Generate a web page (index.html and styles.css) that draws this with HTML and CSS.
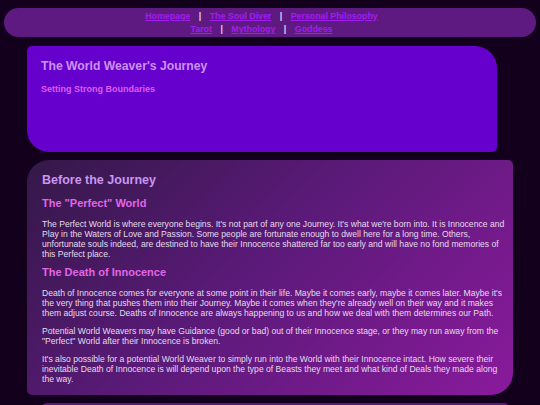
FILE: index.html
```html
<!DOCTYPE html>
<html>
<head>
<meta charset="utf-8">
<link rel="stylesheet" href="styles.css">
</head>
<body>
<nav class="nav">
  <div class="nav-row">
    <a href="#">Homepage</a><span class="sep">|</span><a href="#">The Soul Diver</a><span class="sep">|</span><a href="#">Personal Philosophy</a>
  </div>
  <div class="nav-row">
    <a href="#">Tarot</a><span class="sep">|</span><a href="#">Mythology</a><span class="sep">|</span><a href="#">Goddess</a>
  </div>
</nav>
<header class="hero">
  <h1 class="hero-title">The World Weaver's Journey</h1>
  <p class="hero-sub">Setting Strong Boundaries</p>
</header>
<main class="card">
  <h2 class="card-title">Before the Journey</h2>
  <h3 class="sec-title">The "Perfect" World</h3>
  <p>The Perfect World is where everyone begins. It's not part of any one Journey. It's what we're born into. It is Innocence and Play in the Waters of Love and Passion. Some people are fortunate enough to dwell here for a long time. Others, unfortunate souls indeed, are destined to have their Innocence shattered far too early and will have no fond memories of this Perfect place.</p>
  <h3 class="sec-title sec-gap">The Death of Innocence</h3>
  <p>Death of Innocence comes for everyone at some point in their life. Maybe it comes early, maybe it comes later. Maybe it's the very thing that pushes them into their Journey. Maybe it comes when they're already well on their way and it makes them adjust course. Deaths of Innocence are always happening to us and how we deal with them determines our Path.</p>
  <p>Potential World Weavers may have Guidance (good or bad) out of their Innocence stage, or they may run away from the "Perfect" World after their Innocence is broken.</p>
  <p>It's also possible for a potential World Weaver to simply run into the World with their Innocence intact. How severe their inevitable Death of Innocence is will depend upon the type of Beasts they meet and what kind of Deals they made along the way.</p>
</main>
<section class="next"></section>
</body>
</html>
```

FILE: styles.css
```css
html, body {
  margin: 0;
  padding: 0;
  background: #12001c;
  font-family: "Liberation Sans", Arial, sans-serif;
  overflow: hidden;
}
body {
  padding: 8px 4px 0 4px;
}
.nav {
  background: #5f1a82;
  border-radius: 15px;
  height: 29px;
  padding-right: 17px;
  display: flex;
  flex-direction: column;
  justify-content: center;
  align-items: center;
  font-size: 8.8px;
  font-weight: bold;
  line-height: 13px;
}
.nav-row {
  display: flex;
  align-items: center;
}
.nav a {
  color: #a21cf0;
  text-decoration: underline;
}
.sep {
  color: #e0d4ea;
  margin: 0 8.5px;
  font-weight: bold;
}
.hero {
  margin: 9px 39px 0 23px;
  height: 106px;
  box-sizing: border-box;
  background: #6600cc;
  border-radius: 5px 22px 5px 22px;
  padding: 12px 14px;
}
.hero-title {
  margin: 0;
  font-size: 12.2px;
  line-height: 16px;
  color: #cc92f2;
}
.hero-sub {
  margin: 9px 0 0 0;
  font-size: 9px;
  line-height: 12px;
  font-weight: bold;
  color: #e05cf0;
}
.card {
  display: block;
  margin: 8px 23px 0 23px;
  height: 235px;
  box-sizing: border-box;
  border-radius: 22px 5px 22px 5px;
  background: linear-gradient(135deg, #341848 0%, #5a1a78 45%, #8a1a9c 100%);
  padding: 12px 8px 12px 15px;
  color: #e4dcec;
  font-size: 8.6px;
  line-height: 10px;
}
.card-title {
  margin: 0;
  font-size: 12.5px;
  line-height: 16px;
  color: #c896f2;
}
.sec-title {
  margin: 8.5px 0 0 0;
  font-size: 11px;
  line-height: 13px;
  color: #e066e6;
}
.sec-title.sec-gap {
  margin-top: 6.5px;
}
.card p {
  margin: 8px 0 0 0;
}
.card .sec-title + p {
  margin-top: 9.5px;
}
.next {
  margin: 8px 27px 0 38px;
  height: 40px;
  background: #5a1a7a;
  border-radius: 5px;
}
```
